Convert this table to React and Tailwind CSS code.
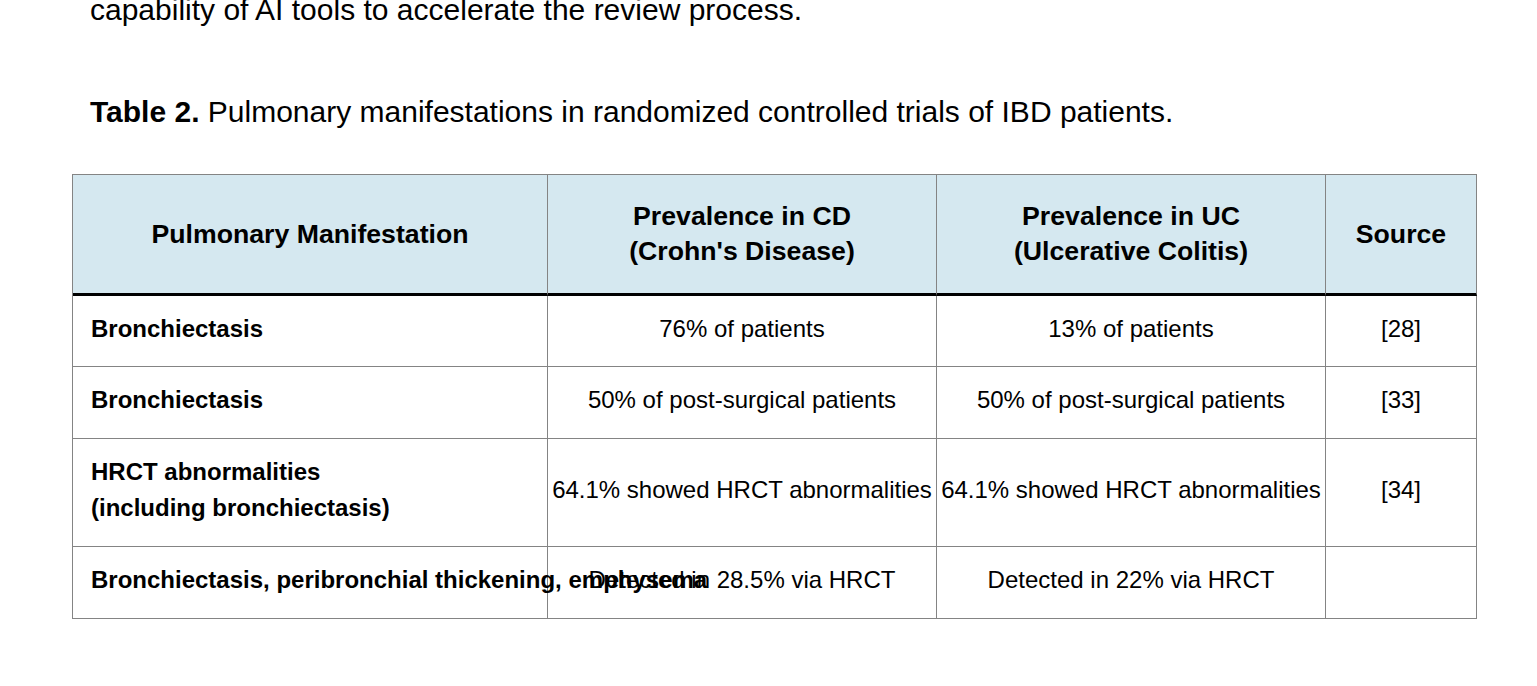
export default function App() {
  const rows = [
    { name: ["Bronchiectasis"], cd: "76% of patients", uc: "13% of patients", src: "[28]", h: "h-[71px]" },
    { name: ["Bronchiectasis"], cd: "50% of post-surgical patients", uc: "50% of post-surgical patients", src: "[33]", h: "h-[72px]" },
    { name: ["HRCT abnormalities", "(including bronchiectasis)"], cd: "64.1% showed HRCT abnormalities", uc: "64.1% showed HRCT abnormalities", src: "[34]", h: "h-[108px]" },
    { name: ["Bronchiectasis, peribronchial thickening, emphysema"], cd: "Detected in 28.5% via HRCT", uc: "Detected in 22% via HRCT", src: "", h: "h-[72px]" },
  ];
  return (
    <div className="min-h-[686px] w-[1537px] bg-white text-black overflow-hidden" style={{ fontFamily: '"Liberation Sans", Arial, sans-serif' }}>
      <p className="mt-[-8px] pl-[90px] text-[30px] leading-[36px]">
        capability of AI tools to accelerate the review process.
      </p>
      <p className="mt-[66px] pl-[90px] text-[30px] leading-[36px]">
        <span className="font-bold">Table 2.</span> Pulmonary manifestations in randomized controlled trials of IBD patients.
      </p>
      <div className="mt-[44px] ml-[72px] w-[1405px] border-l border-t border-[#848484]">
        <div className="grid grid-cols-[475px_389px_389px_151px] bg-[#d5e8f0] font-bold text-[26.67px] leading-[35px]">
          <div className="h-[121px] flex items-center justify-center text-center border-r border-r-[#848484] border-b-[3px] border-b-black">
            Pulmonary Manifestation
          </div>
          <div className="h-[121px] flex items-center justify-center text-center border-r border-r-[#848484] border-b-[3px] border-b-black">
            <div>Prevalence in CD<br />(Crohn's Disease)</div>
          </div>
          <div className="h-[121px] flex items-center justify-center text-center border-r border-r-[#848484] border-b-[3px] border-b-black">
            <div>Prevalence in UC<br />(Ulcerative Colitis)</div>
          </div>
          <div className="h-[121px] flex items-center justify-center text-center border-r border-r-[#848484] border-b-[3px] border-b-black">
            Source
          </div>
        </div>
        {rows.map((r, i) => (
          <div key={i} className="grid grid-cols-[475px_389px_389px_151px] text-[24px] leading-[36px]">
            <div className={`${r.h} flex items-center pl-[18px] pb-[5px] border-r border-b border-[#848484] font-bold whitespace-nowrap`}>
              <div>
                {r.name.map((n, j) => (
                  <div key={j}>{n}</div>
                ))}
              </div>
            </div>
            <div className={`${r.h} flex items-center justify-center pb-[5px] border-r border-b border-[#848484] whitespace-nowrap`}>
              {r.cd}
            </div>
            <div className={`${r.h} flex items-center justify-center pb-[5px] border-r border-b border-[#848484] whitespace-nowrap`}>
              {r.uc}
            </div>
            <div className={`${r.h} flex items-center justify-center pb-[5px] border-r border-b border-[#848484]`}>
              {r.src}
            </div>
          </div>
        ))}
      </div>
    </div>
  );
}
